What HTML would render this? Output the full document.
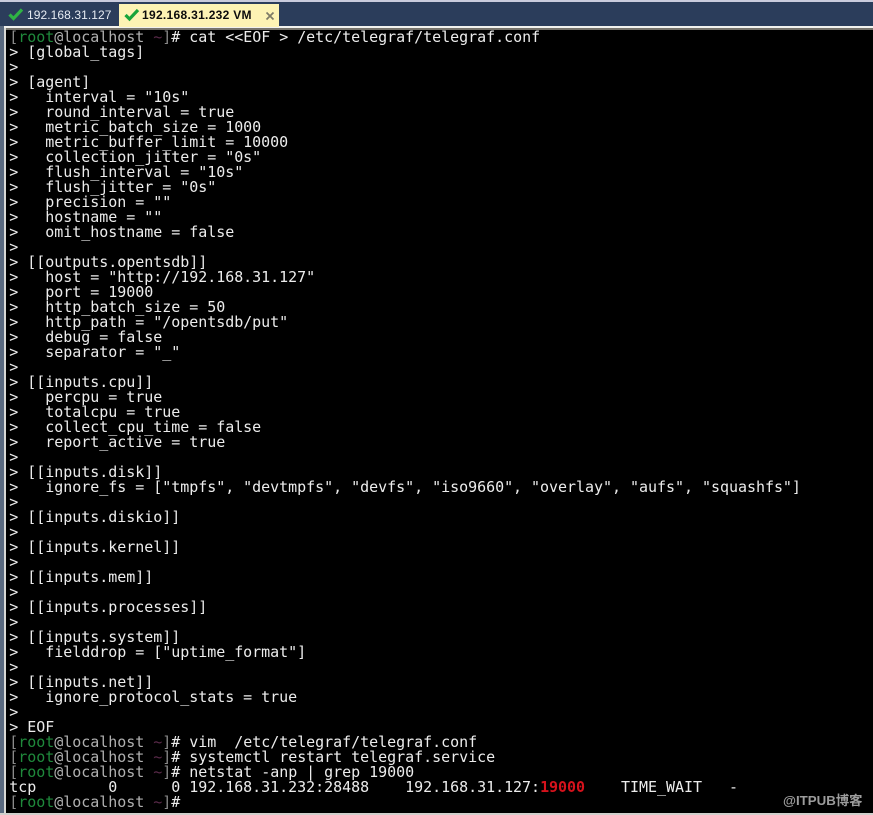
<!DOCTYPE html>
<html><head><meta charset="utf-8"><style>
html,body{margin:0;padding:0;background:#000}
#r{position:relative;width:873px;height:815px;overflow:hidden;background:#000}
#r div{position:absolute}
pre{position:absolute;left:9.3px;top:30px;margin:0;font:15px/15px "DejaVu Sans Mono",monospace;letter-spacing:-0.035px;color:#ececec;white-space:pre;filter:blur(.25px)}
.g{color:#1f8a3c}.d{color:#8a8a8a}.p{color:#5a2a4a}.h{color:#b0b0b0}
.t{font:12px/16px "Liberation Sans",sans-serif;white-space:pre}
</style></head><body><div id="r">
<div style="left:0;top:0;width:873px;height:2px;background:#c9cbdc"></div>
<div style="left:0;top:2px;width:873px;height:24px;background:#2b3d5b"></div>
<div style="left:0;top:26px;width:873px;height:2px;background:#f2f2ee"></div>
<div style="left:0;top:28px;width:873px;height:2px;background:#77746c"></div>
<div style="left:0;top:26px;width:4px;height:789px;background:#5a6a80"></div>
<div style="left:4px;top:28px;width:2px;height:787px;background:#d8d8d4"></div>
<div style="left:0;top:813px;width:873px;height:2px;background:#d0d0cc"></div>
<div style="left:119px;top:4px;width:160px;height:23px;background:#fdf3b4"></div>
<svg style="position:absolute;left:8px;top:7px" width="16" height="14" viewBox="0 0 16 14"><path d="M1.5 7.5L5.5 11.5L14 2.5" fill="none" stroke="#2fb344" stroke-width="3.2"/></svg>
<svg style="position:absolute;left:124px;top:8px" width="16" height="14" viewBox="0 0 16 14"><path d="M1.5 7L5.5 11L14 2" fill="none" stroke="#17a53a" stroke-width="3.2"/></svg>
<div class="t" style="left:27px;top:7px;color:#e6ebf2;letter-spacing:.08px">192.168.31.127</div>
<div class="t" style="left:142px;top:7px;color:#0c0c0c;font-weight:bold;letter-spacing:.3px">192.168.31.232 VM</div>
<svg style="position:absolute;left:265px;top:11px" width="10" height="10" viewBox="0 0 10 10"><path d="M1.5 1.5L8.5 8.5M8.5 1.5L1.5 8.5" stroke="#7d7a66" stroke-width="1.7"/></svg>
<pre><span class="d">[</span><span class="g">root</span><span class="h">@localhost</span> <span class="p">~</span><span class="d">]</span># cat &lt;&lt;EOF &gt; /etc/telegraf/telegraf.conf
&gt; [global_tags]
&gt;
&gt; [agent]
&gt;   interval = "10s"
&gt;   round_interval = true
&gt;   metric_batch_size = 1000
&gt;   metric_buffer_limit = 10000
&gt;   collection_jitter = "0s"
&gt;   flush_interval = "10s"
&gt;   flush_jitter = "0s"
&gt;   precision = ""
&gt;   hostname = ""
&gt;   omit_hostname = false
&gt;
&gt; [[outputs.opentsdb]]
&gt;   host = "http://192.168.31.127"
&gt;   port = 19000
&gt;   http_batch_size = 50
&gt;   http_path = "/opentsdb/put"
&gt;   debug = false
&gt;   separator = "_"
&gt;
&gt; [[inputs.cpu]]
&gt;   percpu = true
&gt;   totalcpu = true
&gt;   collect_cpu_time = false
&gt;   report_active = true
&gt;
&gt; [[inputs.disk]]
&gt;   ignore_fs = ["tmpfs", "devtmpfs", "devfs", "iso9660", "overlay", "aufs", "squashfs"]
&gt;
&gt; [[inputs.diskio]]
&gt;
&gt; [[inputs.kernel]]
&gt;
&gt; [[inputs.mem]]
&gt;
&gt; [[inputs.processes]]
&gt;
&gt; [[inputs.system]]
&gt;   fielddrop = ["uptime_format"]
&gt;
&gt; [[inputs.net]]
&gt;   ignore_protocol_stats = true
&gt;
&gt; EOF
<span class="d">[</span><span class="g">root</span><span class="h">@localhost</span> <span class="p">~</span><span class="d">]</span># vim  /etc/telegraf/telegraf.conf
<span class="d">[</span><span class="g">root</span><span class="h">@localhost</span> <span class="p">~</span><span class="d">]</span># systemctl restart telegraf.service
<span class="d">[</span><span class="g">root</span><span class="h">@localhost</span> <span class="p">~</span><span class="d">]</span># netstat -anp | grep 19000
tcp        0      0 192.168.31.232:28488    192.168.31.127:<b style="color:#d5121c">19000</b>    TIME_WAIT   -
<span class="d">[</span><span class="g">root</span><span class="h">@localhost</span> <span class="p">~</span><span class="d">]</span>#</pre>
<div style="left:783px;top:793px;font:bold 13.3px/16px 'Liberation Sans','Noto Sans CJK SC',sans-serif;color:#9c9c9c;white-space:pre">@ITPUB博客</div>
</div></body></html>
